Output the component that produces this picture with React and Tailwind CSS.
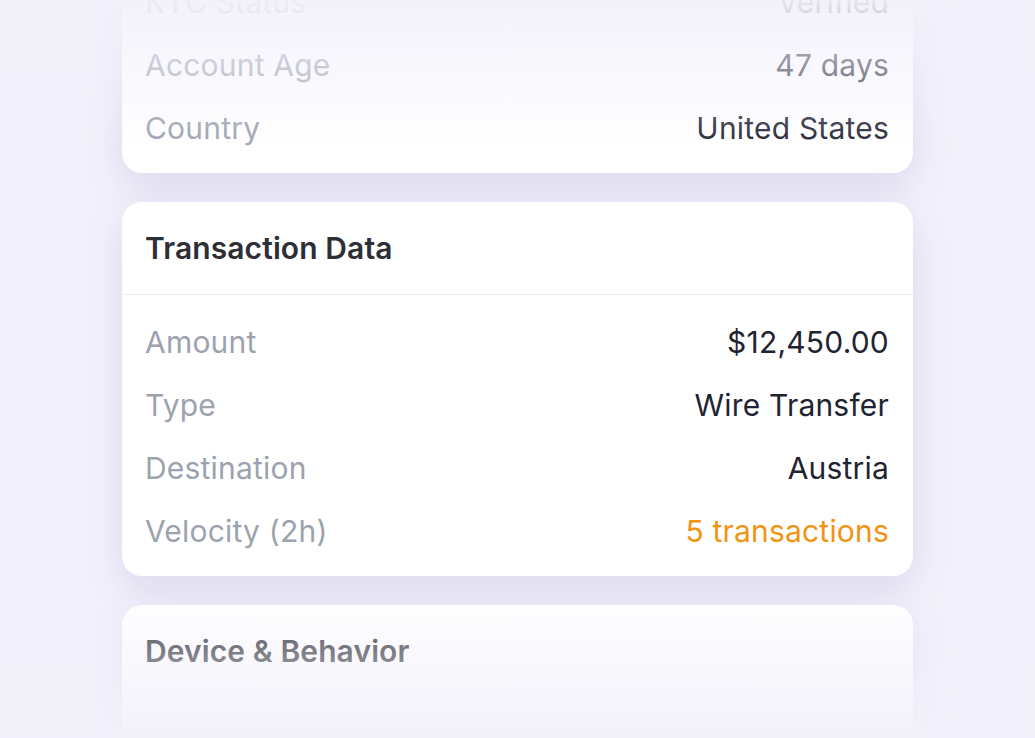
const cards = [
  {
    title: null,
    rows: [
      { label: "KYC Status", value: "Verified" },
      { label: "Account Age", value: "47 days" },
      { label: "Country", value: "United States" },
    ],
  },
  {
    title: "Transaction Data",
    rows: [
      { label: "Amount", value: "$12,450.00" },
      { label: "Type", value: "Wire Transfer" },
      { label: "Destination", value: "Austria" },
      { label: "Velocity (2h)", value: "5 transactions", warn: true },
    ],
  },
  {
    title: "Device & Behavior",
    rows: [],
  },
];

const Card = ({ title, rows }) => (
  <div className="bg-white rounded-[20px] shadow-[0_14px_40px_rgba(70,60,150,0.13)] overflow-hidden">
    {title && (
      <div className="h-[93px] px-[23px] flex items-center border-b border-[#ececf1]">
        <h3 className="text-[30px] font-semibold text-[#2e2f36] tracking-[0.1px]">{title}</h3>
      </div>
    )}
    <div className="pt-4 pb-[13px] min-h-[60px]">
      {rows.map((row) => (
        <div key={row.label} className="h-[63px] pl-[23px] pr-6 flex items-center justify-between text-[30px] tracking-[0.2px]">
          <span className="text-[#9ca3af]">{row.label}</span>
          <span className={row.warn ? "text-[#f39312]" : "text-[#1f2433]"}>{row.value}</span>
        </div>
      ))}
    </div>
  </div>
);

export default function App() {
  return (
    <div
      className="relative h-[738px] w-full overflow-hidden bg-[#f2f1fb]"
      style={{ fontFamily: "Inter, 'Noto Sans', sans-serif" }}
    >
      <div className="mx-auto w-[791px] mt-[-45px] flex flex-col gap-[29px]">
        {cards.map((c, i) => (
          <Card key={i} {...c} />
        ))}
      </div>
      <div className="pointer-events-none absolute inset-x-0 top-0 h-[150px] bg-gradient-to-b from-[#f2f1fb]/95 to-transparent" />
      <div className="pointer-events-none absolute inset-x-0 bottom-0 h-[150px] bg-gradient-to-t from-[#f2f1fb]/95 to-transparent" />
    </div>
  );
}
